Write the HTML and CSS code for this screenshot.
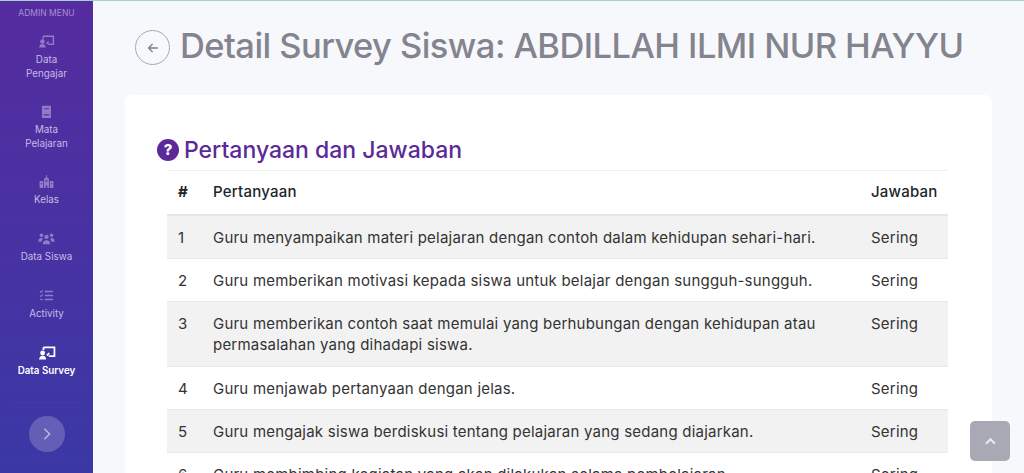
FILE: index.html
```html
<!DOCTYPE html>
<html lang="id">
<head>
<meta charset="utf-8">
<title>Detail Survey Siswa</title>
<link rel="stylesheet" href="styles.css">
</head>
<body>
<div class="app">
  <aside class="sidebar">
    <div class="menu-label">ADMIN MENU</div>
    <nav class="menu">
      <a class="item item-two">
        <svg class="ico" viewBox="0 0 20 16"><path d="M6 1.500h12.500v10H12M6 1.500v3" fill="none" stroke="currentColor" stroke-width="1.800"/><path d="M10 11l2.500-3" stroke="currentColor" stroke-width="1.800"/><circle cx="5" cy="8" r="2.800" fill="currentColor"/><path d="M1 15.500c0-3 1.500-4.500 4-4.500s4 1.500 4 4.500z" fill="currentColor"/></svg>
        <span>Data<br>Pengajar</span>
      </a>
      <a class="item item-two">
        <svg class="ico" viewBox="0 0 20 16"><path fill-rule="evenodd" d="M4.500 1h11v15h-11zM7 4v1.200h6V4zM6.500 11.500v1.500h7v-1.500z" fill="currentColor"/></svg>
        <span>Mata<br>Pelajaran</span>
      </a>
      <a class="item">
        <svg class="ico" viewBox="0 0 20 16"><path fill-rule="evenodd" d="M7 16V5l3-3 3 3v11h-2v-3H9v3zM9 6v2h2V6zM1.500 16V7.500H6V16zM14 16V7.500h4.500V16zM3 10v1.500h1.500V10zM15.500 10v1.500H17V10z" fill="currentColor"/><path d="M10 3V0" stroke="currentColor"/></svg>
        <span>Kelas</span>
      </a>
      <a class="item">
        <svg class="ico" viewBox="0 0 20 16"><circle cx="10" cy="6" r="2.600" fill="currentColor"/><circle cx="3.800" cy="4" r="2.200" fill="currentColor"/><circle cx="16.200" cy="4" r="2.200" fill="currentColor"/><path d="M5.500 15c0-3.500 1.500-5 4.500-5s4.500 1.500 4.500 5zM0 12c0-3 1-4.500 3.800-4.500.7 0 1.200.1 1.700.4C4.700 8.800 4.200 10.500 4 12zM20 12c0-3-1-4.500-3.800-4.500-.7 0-1.200.1-1.700.4.800.9 1.300 2.600 1.500 4.100z" fill="currentColor"/></svg>
        <span>Data Siswa</span>
      </a>
      <a class="item">
        <svg class="ico" viewBox="0 0 20 16"><path d="M8 3h10M8 8h10M8 13h10" stroke="currentColor" stroke-width="1.800"/><path d="M2 3l1.200 1.200L5.500 1.700M2 8l1.200 1.200L5.500 6.700M2 13h3.500" fill="none" stroke="currentColor" stroke-width="1.300"/></svg>
        <span>Activity</span>
      </a>
      <a class="item item-active">
        <svg class="ico" viewBox="0 0 20 16"><path d="M6 1.500h12.500v10H12M6 1.500v3" fill="none" stroke="currentColor" stroke-width="2"/><path d="M10 11l2.500-3" stroke="currentColor" stroke-width="2"/><circle cx="5" cy="8" r="2.800" fill="currentColor"/><path d="M1 15.500c0-3 1.500-4.500 4-4.500s4 1.500 4 4.500z" fill="currentColor"/></svg>
        <span>Data Survey</span>
      </a>
    </nav>
    <div class="toggle-wrap">
      <button class="toggle" aria-label="Buka menu">
        <svg viewBox="0 0 10 16" class="toggle-ico"><path d="M2 2l6 6-6 6" fill="none" stroke="currentColor" stroke-width="1.800"/></svg>
      </button>
    </div>
  </aside>

  <main class="main">
    <header class="page-head">
      <a class="back" aria-label="Kembali">
        <svg viewBox="0 0 16 16" class="back-ico"><path d="M13.500 8H3M7.500 3.500L3 8l4.500 4.500" fill="none" stroke="currentColor" stroke-width="1.500"/></svg>
      </a>
      <h1 class="title">Detail Survey Siswa: ABDILLAH ILMI NUR HAYYU</h1>
    </header>

    <section class="card">
      <h2 class="card-title">
        <svg class="q-ico" viewBox="0 0 22 22"><circle cx="11" cy="11" r="11" fill="currentColor"/><text x="11" y="16.200" text-anchor="middle" class="q-mark">?</text></svg>
        <span>Pertanyaan dan Jawaban</span>
      </h2>
      <table class="qa">
        <thead>
          <tr><th class="c-no">#</th><th class="c-q">Pertanyaan</th><th class="c-a">Jawaban</th></tr>
        </thead>
        <tbody>
          <tr><td>1</td><td>Guru menyampaikan materi pelajaran dengan contoh dalam kehidupan sehari-hari.</td><td>Sering</td></tr>
          <tr><td>2</td><td>Guru memberikan motivasi kepada siswa untuk belajar dengan sungguh-sungguh.</td><td>Sering</td></tr>
          <tr class="row-tall"><td>3</td><td>Guru memberikan contoh saat memulai yang berhubungan dengan kehidupan atau permasalahan yang dihadapi siswa.</td><td>Sering</td></tr>
          <tr><td>4</td><td>Guru menjawab pertanyaan dengan jelas.</td><td>Sering</td></tr>
          <tr><td>5</td><td>Guru mengajak siswa berdiskusi tentang pelajaran yang sedang diajarkan.</td><td>Sering</td></tr>
          <tr><td>6</td><td>Guru membimbing kegiatan yang akan dilakukan selama pembelajaran.</td><td>Sering</td></tr>
        </tbody>
      </table>
    </section>
  </main>

  <a class="to-top" aria-label="Ke atas">
    <svg viewBox="0 0 14 10" class="to-top-ico"><path d="M2 7.500l5-5 5 5" fill="none" stroke="currentColor" stroke-width="2.200"/></svg>
  </a>
</div>
</body>
</html>
```

FILE: styles.css
```css
* { box-sizing: border-box; }
html, body { margin: 0; height: 100%; overflow: hidden; }
body { font-family: Inter, "Noto Sans", "Liberation Sans", sans-serif; color: #212529; background: #f7f8fc; }

.app { display: flex; height: 473px; overflow: hidden; border-top: 1px solid #a5cfc9; }

.sidebar {
  width: 93px; flex: none; height: 472px;
  background: linear-gradient(180deg, #552c9f 0%, #3b38a6 100%);
  display: flex; flex-direction: column; align-items: center; color: #fff;
}
.menu-label { font-size: 8.5px; line-height: 12px; margin-top: 6px; color: #a88ed3; white-space: nowrap; }
.menu { display: flex; flex-direction: column; align-items: center; width: 100%; }
.item { display: flex; flex-direction: column; align-items: center; text-align: center; width: 100%; color: #c7bbe6; font-size: 9.8px; line-height: 14px; height: 57px; padding-top: 16px; }
.item-two { height: 70px; }
.ico { width: 17px; height: 13px; margin-bottom: 5px; opacity: .55; flex: none; }
.item-active { color: #fff; font-weight: 600; }
.item-active .ico { opacity: 1; width: 18px; height: 14px; margin-bottom: 4px; }
.toggle-wrap { margin-top: 15px; padding-top: 13px; border-top: 1px solid rgba(255,255,255,.025); width: 72px; display: flex; justify-content: center; }
.toggle { width: 36px; height: 36px; border: 0; border-radius: 50%; background: rgba(255,255,255,.2); color: #b9b3e6; padding: 0; display: flex; align-items: center; justify-content: center; }
.toggle-ico { width: 10px; height: 14px; }

.main { flex: 1; min-width: 0; padding: 0 32px; }
.page-head { display: flex; align-items: flex-start; padding: 26px 0 0 10px; height: 94px; }
.back { width: 35px; height: 35px; border: 1px solid #a8a9b5; border-radius: 50%; color: #7f808f; display: flex; align-items: center; justify-content: center; margin: 3px 10px 0 0; flex: none; }
.back-ico { width: 14px; height: 14px; }
.title { margin: 0; font-size: 34.5px; line-height: 37px; letter-spacing: -.57px; font-weight: 500; color: #84848f; white-space: nowrap; }

.card { background: #fff; border-radius: 6px; padding: 40px 44px 0 42px; height: 400px; }
.card-title { display: flex; align-items: center; margin: 0 0 5px -10px; font-size: 23px; line-height: 30px; font-weight: 500; color: #5b2a98; }
.q-ico { width: 22px; height: 22px; margin-right: 5px; flex: none; }
.q-mark { fill: #fff; font-size: 15px; font-weight: 800; font-family: Inter, sans-serif; }

.qa { width: 100%; border-collapse: collapse; table-layout: fixed; font-size: 15px; line-height: 21px; letter-spacing: .22px; color: #333; }
.qa th { text-align: left; font-weight: 500; color: #212529; padding: 10px 11px 12px; border-top: 1px solid #eceef0; border-bottom: 2px solid #e4e6e8; }
.qa td { padding: 11px 11px 10px; border-bottom: 1px solid #e9e9ea; vertical-align: top; }
.qa .row-tall td { padding-bottom: 11px; }
.c-no { width: 35px; }
.c-a { width: 88px; }
.c-no { font-size: 15px; font-weight: 700 !important; }
.qa tbody tr:nth-child(odd) { background: #f2f2f2; }

.to-top { position: fixed; right: 14px; bottom: 12px; width: 40px; height: 40px; border-radius: 5px; background: #a8a9b5; color: #e9e9ee; display: flex; align-items: center; justify-content: center; }
.to-top-ico { width: 13px; height: 9px; }
```
